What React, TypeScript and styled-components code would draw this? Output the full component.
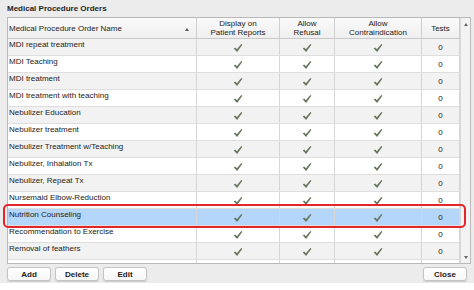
import styled, { createGlobalStyle } from "styled-components"

const Global = createGlobalStyle`
  html, body {
    margin: 0;
    padding: 0;
    background: #ffffff;
  }
  body {
    font-family: "Liberation Sans", Arial, sans-serif;
    font-size: 8px;
    color: #222;
  }
`

const Window = styled.div`
  position: relative;
  width: 474px;
  height: 283px;
  background: #ececec;
  box-shadow: 0 1px 2px rgba(0, 0, 0, 0.35);
  padding: 4px 3px 0 7px;
  box-sizing: border-box;
  display: flex;
  flex-direction: column;
`

const Title = styled.div`
  font-weight: bold;
  font-size: 8px;
  line-height: 10px;
  height: 13px;
  color: #1e1e1e;
`

const Table = styled.div`
  display: flex;
  width: 464px;
  height: 247px;
  border: 1px solid #b9b9b9;
  box-sizing: border-box;
  background: #fff;
  overflow: hidden;
`

const Grid = styled.div`
  width: 452px;
  display: flex;
  flex-direction: column;
`

const cols = "189px 83px 55px 87px 38px"

const HeaderRow = styled.div`
  display: grid;
  grid-template-columns: ${cols};
  height: 21px;
  background: linear-gradient(#fafafa, #efefef);
  border-bottom: 1px solid #c8c8c8;
  box-sizing: border-box;
  flex-shrink: 0;
`

const HeadCell = styled.div<{ $left?: boolean }>`
  position: relative;
  display: flex;
  align-items: center;
  justify-content: ${(p) => (p.$left ? "flex-start" : "center")};
  text-align: center;
  padding-left: ${(p) => (p.$left ? "1px" : "0")};
  line-height: 9px;
  border-right: 1px solid #cfcfcf;
  box-sizing: border-box;
  color: #222;
`

const SortArrow = styled.span`
  position: absolute;
  right: 7px;
  top: 10px;
  width: 0;
  height: 0;
  border-left: 2px solid transparent;
  border-right: 2px solid transparent;
  border-bottom: 3px solid #555;
`

const Body = styled.div`
  flex: 1;
  overflow: hidden;
`

const Row = styled.div<{ $alt: boolean; $selected: boolean }>`
  display: grid;
  grid-template-columns: ${cols};
  height: 17px;
  background: ${(p) => (p.$selected ? "#b5d6fb" : p.$alt ? "#f2f2f2" : "#ffffff")};
  border-bottom: 1px solid #dedede;
  box-sizing: border-box;
`

const NameCell = styled.div`
  padding: 1px 0 0 1px;
  line-height: 10px;
  border-right: 1px solid #d6d6d6;
  box-sizing: border-box;
  white-space: nowrap;
  overflow: hidden;
`

const Cell = styled.div`
  display: flex;
  align-items: center;
  justify-content: center;
  padding-top: 1px;
  border-right: 1px solid #d6d6d6;
  box-sizing: border-box;
`

const Scrollbar = styled.div`
  width: 10px;
  border-left: 1px solid #d8d8d8;
  background: #f3f3f3;
  display: flex;
  flex-direction: column;
  align-items: center;
  justify-content: space-between;
  padding: 5px 0 4px;
  box-sizing: border-box;
`

const Arrow = styled.span<{ $down?: boolean }>`
  width: 0;
  height: 0;
  border-left: 2px solid transparent;
  border-right: 2px solid transparent;
  ${(p) => (p.$down ? "border-top: 3px solid #666;" : "border-bottom: 3px solid #666;")}
`

const Footer = styled.div`
  display: flex;
  align-items: center;
  gap: 4px;
  padding-top: 3px;
  padding-right: 4px;
`

const Button = styled.button<{ $push?: boolean }>`
  width: 44px;
  height: 14px;
  padding: 0;
  margin-left: ${(p) => (p.$push ? "auto" : "0")};
  font-family: "Liberation Sans", Arial, sans-serif;
  font-size: 8px;
  font-weight: bold;
  color: #222;
  background: linear-gradient(#ffffff, #f7f7f7);
  border: 1px solid #c4c4c4;
  border-radius: 3px;
  box-shadow: 0 0.5px 1px rgba(0, 0, 0, 0.15);
`

const Highlight = styled.div`
  position: absolute;
  left: 3px;
  top: 204px;
  width: 463px;
  height: 24px;
  border: 2px solid #e3262a;
  border-radius: 5px;
  box-sizing: border-box;
  pointer-events: none;
`

const Check = () => (
  <svg width="10" height="10" viewBox="0 0 10 10">
    <path
      d="M0.8 5.4 L2.2 4.4 L3.9 6.3 L8.3 0.9 L9.4 1.8 L4.1 9 Z"
      fill="#65745b"
    />
  </svg>
)

const rows = [
  "MDI repeat treatment",
  "MDI Teaching",
  "MDI treatment",
  "MDI treatment with teaching",
  "Nebulizer Education",
  "Nebulizer treatment",
  "Nebulizer Treatment w/Teaching",
  "Nebulizer, Inhalation Tx",
  "Nebulizer, Repeat Tx",
  "Nursemaid Elbow-Reduction",
  "Nutrition Counseling",
  "Recommendation to Exercise",
  "Removal of feathers",
  "Removal of Foreign Body",
]

const App = () => {
  return (
    <>
      <Global />
      <Window>
        <Title>Medical Procedure Orders</Title>
        <Table>
          <Grid>
            <HeaderRow>
              <HeadCell $left>
                Medical Procedure Order Name
                <SortArrow />
              </HeadCell>
              <HeadCell>
                Display on
                <br />
                Patient Reports
              </HeadCell>
              <HeadCell>
                Allow
                <br />
                Refusal
              </HeadCell>
              <HeadCell>
                Allow
                <br />
                Contraindication
              </HeadCell>
              <HeadCell>Tests</HeadCell>
            </HeaderRow>
            <Body>
              {rows.map((name, i) => (
                <Row key={name} $alt={i % 2 === 0} $selected={name === "Nutrition Counseling"}>
                  <NameCell>{name}</NameCell>
                  <Cell>
                    <Check />
                  </Cell>
                  <Cell>
                    <Check />
                  </Cell>
                  <Cell>
                    <Check />
                  </Cell>
                  <Cell>0</Cell>
                </Row>
              ))}
            </Body>
          </Grid>
          <Scrollbar>
            <Arrow />
            <Arrow $down />
          </Scrollbar>
        </Table>
        <Footer>
          <Button>Add</Button>
          <Button>Delete</Button>
          <Button>Edit</Button>
          <Button $push>Close</Button>
        </Footer>
        <Highlight />
      </Window>
    </>
  )
}

export default App
